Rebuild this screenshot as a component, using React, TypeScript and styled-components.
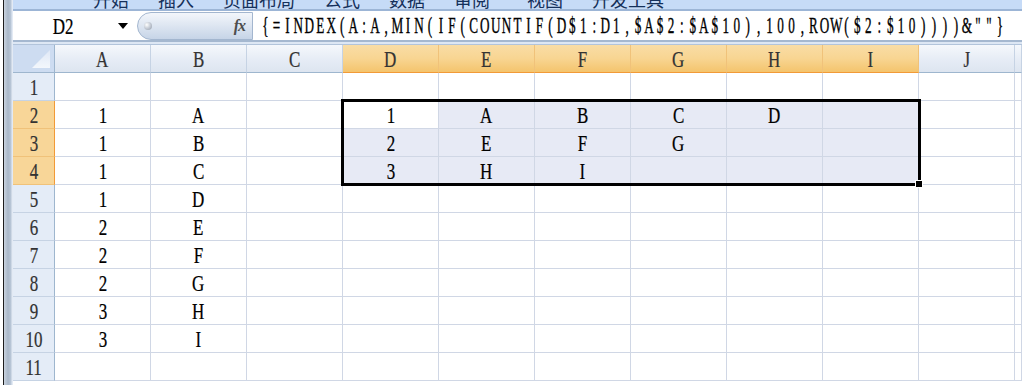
import React from "react";
import styled, { createGlobalStyle } from "styled-components";

const GlobalStyle = createGlobalStyle`
  html, body {
    margin: 0;
    padding: 0;
    background: #ffffff;
    overflow: hidden;
  }
  body {
    font-family: "Liberation Serif", "Noto Sans CJK SC", serif;
  }
`;

const COLS = ["A", "B", "C", "D", "E", "F", "G", "H", "I", "J"];
const TABS = ["开始", "插入", "页面布局", "公式", "数据", "审阅", "视图", "开发工具"];
const FORMULA = '{=INDEX(A:A,MIN(IF(COUNTIF(D$1:D1,$A$2:$A$10),100,ROW($2:$10))))&""}';

// row number -> values for A..J
const DATA: Record<number, string[]> = {
  2: ["1", "A", "", "1", "A", "B", "C", "D"],
  3: ["1", "B", "", "2", "E", "F", "G"],
  4: ["1", "C", "", "3", "H", "I"],
  5: ["1", "D"],
  6: ["2", "E"],
  7: ["2", "F"],
  8: ["2", "G"],
  9: ["3", "H"],
  10: ["3", "I"],
};

const isSelRow = (r: number) => r >= 2 && r <= 4;
const isSelCol = (c: number) => c >= 3 && c <= 8;

const Page = styled.div`
  display: flex;
  width: 1022px;
  height: 385px;
  overflow: hidden;
`;

const WindowEdge = styled.div`
  width: 13px;
  flex: none;
  background: linear-gradient(
    to right,
    #ffffff 0,
    #ffffff 3px,
    #1c1c1c 3px,
    #1c1c1c 4px,
    #c9d3df 4px,
    #a9b7c8 8px,
    #b9c7d8 11px,
    #e3eaf4 12px
  );
`;

const Window = styled.div`
  flex: 1;
  display: flex;
  flex-direction: column;
  min-width: 0;
`;

const TabStrip = styled.div`
  height: 11px;
  flex: none;
  display: flex;
  align-items: flex-end;
  gap: 29px;
  padding: 0 0 1px 80px;
  box-sizing: border-box;
  overflow: hidden;
  background: #c6dbf7;
  border-bottom: 2px solid #9cb5d6;
`;

const Tab = styled.span<{ $shift?: number }>`
  font-family: "Noto Sans CJK SC", sans-serif;
  font-size: 18px;
  line-height: 18px;
  height: 18px;
  flex: none;
  color: #15305a;
  margin-left: ${(p) => p.$shift || 0}px;
`;

const FormulaBar = styled.div`
  height: 29px;
  flex: none;
  display: flex;
  align-items: stretch;
  background: #ffffff;
  border-bottom: 2px solid #a5b8d0;
`;

const NameBox = styled.div`
  width: 122px;
  flex: none;
  display: flex;
  align-items: center;
  padding-left: 38px;
  box-sizing: border-box;
`;

const DropArrow = styled.span`
  width: 0;
  height: 0;
  margin: 1px 7px 0 auto;
  border-left: 5px solid transparent;
  border-right: 5px solid transparent;
  border-top: 6px solid #000000;
`;

const Pill = styled.div`
  width: 116px;
  flex: none;
  margin: 1px 0 0 2px;
  display: flex;
  align-items: center;
  justify-content: space-between;
  padding: 0 7px 0 6px;
  box-sizing: border-box;
  border: 1px solid #a3b6cf;
  border-radius: 14px 0 0 14px;
  background: linear-gradient(#f3f6fb 0%, #dfe7f2 45%, #c6d4e7 100%);
`;

const Knob = styled.span`
  width: 8px;
  height: 8px;
  border-radius: 50%;
  background: radial-gradient(circle at 35% 35%, #ffffff 0, #c9cfd8 45%, #8f99a6 100%);
`;

const Fx = styled.span`
  font-family: "Liberation Serif", serif;
  font-style: italic;
  font-weight: bold;
  font-size: 16px;
  color: #4d4d4d;
  letter-spacing: -1px;
`;

const FormulaText = styled.div`
  flex: 1;
  display: flex;
  align-items: center;
  padding-left: 7px;
  overflow: hidden;
`;

// half-width serif glyphs on a fixed pitch, as the sheet font draws them
const FormulaLine = styled.span`
  display: inline-flex;
  flex: none;
  font-size: 20.6px;
  color: #000000;
  -webkit-text-stroke: 0.35px #000000;
  transform: scale(0.64, 1.1);
  transform-origin: left center;
`;

const FChar = styled.span`
  display: inline-block;
  width: 17.14px;
  text-align: center;
  white-space: pre;
`;

const Glyph = styled.span`
  display: inline-block;
  font-family: "Liberation Serif", serif;
  font-size: 20px;
  line-height: 20px;
  -webkit-text-stroke: 0.2px currentColor;
  transform: scale(0.85, 1.15);
`;

const HeaderGap = styled.div`
  height: 2px;
  flex: none;
  background: #dde7f4;
`;

// the cell grid and the selection overlay share one grid area
const SheetStack = styled.div`
  display: grid;
  border-top: 1px solid #b2c4db;
`;

const Sheet = styled.div`
  grid-area: 1 / 1;
  display: grid;
  grid-template-columns: 42px repeat(10, 96px) 1fr;
  grid-auto-rows: 28px;
`;

const Overlay = styled(Sheet)`
  z-index: 2;
  pointer-events: none;
`;

const Corner = styled.div`
  border-right: 1px solid #9eb6ce;
  border-bottom: 1px solid #9eb6ce;
  box-sizing: border-box;
  background: #cddcf1;
  display: flex;
`;

const ColHead = styled.div<{ $on?: boolean }>`
  display: flex;
  align-items: center;
  justify-content: center;
  box-sizing: border-box;
  color: #333333;
  border-right: 1px solid ${(p) => (p.$on ? "#f0c27a" : "#c6d3e4")};
  border-bottom: 1px solid ${(p) => (p.$on ? "#f29a37" : "#9eb6ce")};
  background: ${(p) =>
    p.$on
      ? "linear-gradient(#f9dda6 0%, #f8d592 50%, #f4c46d 100%)"
      : "linear-gradient(#f5f8fc 0%, #e7edf6 50%, #dde5f0 100%)"};
`;

const RowHead = styled.div<{ $on?: boolean }>`
  display: flex;
  align-items: center;
  justify-content: center;
  box-sizing: border-box;
  color: #333333;
  border-right: 1px solid ${(p) => (p.$on ? "#f29a37" : "#9eb6ce")};
  border-bottom: 1px solid ${(p) => (p.$on ? "#f0c27a" : "#c6d3e4")};
  background: ${(p) => (p.$on ? "#f8d698" : "#e4ecf7")};
`;

const Cell = styled.div<{ $sel?: boolean }>`
  display: flex;
  align-items: center;
  justify-content: center;
  box-sizing: border-box;
  color: #000000;
  border-right: 1px solid #d0d7e5;
  border-bottom: 1px solid #d0d7e5;
  background: ${(p) => (p.$sel ? "#e7eaf5" : "#ffffff")};
`;

const Selection = styled.div`
  grid-column: 5 / 11;
  grid-row: 3 / 6;
  position: relative;
  margin: -2px -2px -1px -2px;
  border: 3px solid #000000;
`;

const FillHandle = styled.span`
  position: absolute;
  right: -5px;
  bottom: -5px;
  width: 6px;
  height: 6px;
  background: #000000;
  border: 1px solid #ffffff;
`;

const CornerMark = () => (
  <svg width="41" height="27" viewBox="0 0 41 27">
    <defs>
      <linearGradient id="cornerTri" x1="0" y1="0" x2="0" y2="1">
        <stop offset="0" stopColor="#dfe8f6" />
        <stop offset="1" stopColor="#f3f7fc" />
      </linearGradient>
    </defs>
    <polygon points="37,5 37,23 19,23" fill="url(#cornerTri)" />
  </svg>
);

export default function App() {
  const rows = Array.from({ length: 11 }, (_, i) => i + 1);
  return (
    <>
      <GlobalStyle />
      <Page>
        <WindowEdge />
        <Window>
          <TabStrip>
            {TABS.map((t) => (
              <Tab key={t} $shift={t === "视图" ? 8 : 0}>
                {t}
              </Tab>
            ))}
          </TabStrip>
          <FormulaBar>
            <NameBox>
              <Glyph>D2</Glyph>
              <DropArrow />
            </NameBox>
            <Pill>
              <Knob />
              <Fx>fx</Fx>
            </Pill>
            <FormulaText>
              <FormulaLine>
                {FORMULA.split("").map((ch, i) => (
                  <FChar key={i}>{ch}</FChar>
                ))}
              </FormulaLine>
            </FormulaText>
          </FormulaBar>
          <HeaderGap />
          <SheetStack>
            <Sheet>
              <Corner>
                <CornerMark />
              </Corner>
              {COLS.map((c, ci) => (
                <ColHead key={c} $on={isSelCol(ci)}>
                  <Glyph>{c}</Glyph>
                </ColHead>
              ))}
              <ColHead />
              {rows.map((r) => (
                <React.Fragment key={r}>
                  <RowHead $on={isSelRow(r)}>
                    <Glyph>{r}</Glyph>
                  </RowHead>
                  {COLS.map((c, ci) => {
                    const v = (DATA[r] || [])[ci] || "";
                    const sel = isSelRow(r) && isSelCol(ci) && !(r === 2 && ci === 3);
                    return (
                      <Cell key={c} $sel={sel}>
                        {v && <Glyph>{v}</Glyph>}
                      </Cell>
                    );
                  })}
                  <Cell />
                </React.Fragment>
              ))}
            </Sheet>
            <Overlay>
              <Selection>
                <FillHandle />
              </Selection>
            </Overlay>
          </SheetStack>
        </Window>
      </Page>
    </>
  );
}
